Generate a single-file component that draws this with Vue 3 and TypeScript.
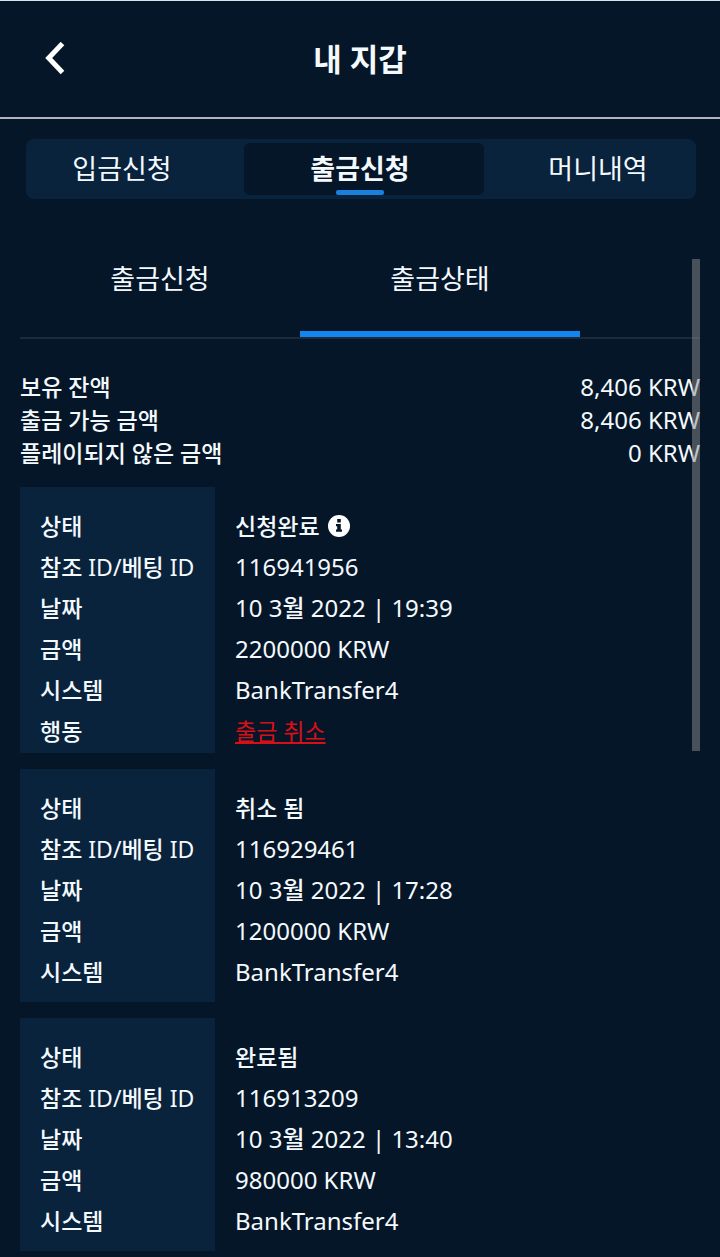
<script setup lang="ts">
import { ref } from 'vue'

interface Row {
  label: string
  value: string
  korean?: boolean
  info?: boolean
  action?: boolean
}

const sections = ['입금신청', '출금신청', '머니내역']
const activeSection = ref(1)

const subTabs = ['출금신청', '출금상태']
const activeSubTab = ref(1)

const balances = [
  { label: '보유 잔액', amount: '8,406 KRW' },
  { label: '출금 가능 금액', amount: '8,406 KRW' },
  { label: '플레이되지 않은 금액', amount: '0 KRW' },
]

const requests: Row[][] = [
  [
    { label: '상태', value: '신청완료', korean: true, info: true },
    { label: '참조 ID/베팅 ID', value: '116941956' },
    { label: '날짜', value: '10 3월 2022 | 19:39' },
    { label: '금액', value: '2200000 KRW' },
    { label: '시스템', value: 'BankTransfer4' },
    { label: '행동', value: '출금 취소', korean: true, action: true },
  ],
  [
    { label: '상태', value: '취소 됨', korean: true },
    { label: '참조 ID/베팅 ID', value: '116929461' },
    { label: '날짜', value: '10 3월 2022 | 17:28' },
    { label: '금액', value: '1200000 KRW' },
    { label: '시스템', value: 'BankTransfer4' },
  ],
  [
    { label: '상태', value: '완료됨', korean: true },
    { label: '참조 ID/베팅 ID', value: '116913209' },
    { label: '날짜', value: '10 3월 2022 | 13:40' },
    { label: '금액', value: '980000 KRW' },
    { label: '시스템', value: 'BankTransfer4' },
  ],
]

// Splits a text into runs so that Latin and Korean can carry different weights.
function runs(text: string) {
  return text
    .split(/([가-힣]+)/)
    .filter(Boolean)
    .map((part) => ({ part, hangul: /[가-힣]/.test(part) }))
}
</script>

<template>
  <div class="page" lang="ko">
    <header class="header">
      <button class="back" type="button" aria-label="뒤로">
        <svg width="20" height="34" viewBox="0 0 20 34" fill="none" stroke="#fff" stroke-width="5">
          <path d="M17.5 1.5 L3.7 16 L17.5 30.5" />
        </svg>
      </button>
      <h1 class="title">내 지갑</h1>
    </header>

    <nav class="sections">
      <button
        v-for="(name, i) in sections"
        :key="name"
        type="button"
        class="section"
        :class="{ active: i === activeSection }"
        @click="activeSection = i"
      >
        {{ name }}
      </button>
    </nav>

    <main class="panel">
      <div class="subtabs" role="tablist">
        <button
          v-for="(name, i) in subTabs"
          :key="name"
          type="button"
          role="tab"
          class="subtab"
          :class="{ active: i === activeSubTab }"
          :aria-selected="i === activeSubTab"
          @click="activeSubTab = i"
        >
          {{ name }}
        </button>
      </div>

      <dl class="balances">
        <div v-for="b in balances" :key="b.label" class="balance">
          <dt class="korean">{{ b.label }}</dt>
          <dd>{{ b.amount }}</dd>
        </div>
      </dl>

      <table v-for="(rows, n) in requests" :key="n" class="request">
        <tbody>
          <tr v-for="row in rows" :key="row.label" :class="{ 'action-row': row.action }">
            <th scope="row"><span v-for="(r, k) in runs(row.label)" :key="k" :class="{ hangul: r.hangul }">{{ r.part }}</span></th>
            <td :class="{ korean: row.korean }">
              <a v-if="row.action" class="cancel" href="#">{{ row.value }}</a>
              <div v-else class="value">
                <span><span v-for="(r, k) in runs(row.value)" :key="k" :class="{ hangul: r.hangul }">{{ r.part }}</span></span>
                <svg v-if="row.info" class="info" width="22" height="22" viewBox="0 0 22 22">
                  <circle cx="11" cy="11" r="11" fill="#fff" />
                  <path
                    d="M9.2 4h3.6v3.4H9.2z M8 9h4.8v5.6H14v2.2H8v-2.2h1.2v-3.4H8z"
                    fill="#051628"
                  />
                </svg>
              </div>
            </td>
          </tr>
        </tbody>
      </table>

      <div class="scrollbar" aria-hidden="true"></div>
    </main>
  </div>
</template>

<style>
body {
  margin: 0;
  background: #051628;
}
</style>

<style scoped>
.page {
  min-height: 100vh;
  box-sizing: border-box;
  border-top: 1px solid #d5e6ee;
  background: #051628;
  color: #f4f9fd;
  font-family: 'Noto Sans', 'Noto Sans CJK KR', sans-serif;
  font-size: 24px;
  overflow: hidden;
}

button {
  margin: 0;
  padding: 0;
  border: 0;
  background: none;
  color: inherit;
  font: inherit;
  cursor: pointer;
}

.header {
  display: grid;
  grid-template-columns: 110px 1fr 110px;
  align-items: center;
  height: 116px;
  border-bottom: 2px solid #b3b3c0;
}

.back {
  display: flex;
  justify-content: center;
  padding: 12px 0;
}

.title {
  margin: 0;
  font-size: 31px;
  font-weight: 700;
  line-height: 40px;
  text-align: center;
}

.sections {
  display: grid;
  grid-template-columns: 218px 240px 1fr;
  margin: 20px 24px 0 26px;
  padding: 4px 0;
  border-radius: 8px;
  background: #09233d;
}

.section {
  height: 52px;
  font-size: 27px;
  line-height: 52px;
}

.section:first-child {
  padding-right: 26px;
}

.section:last-child {
  padding-left: 16px;
}

.section.active {
  position: relative;
  padding-right: 8px;
  border-radius: 6px;
  background: #051628;
  font-weight: 700;
}

.section.active::after {
  content: '';
  position: absolute;
  bottom: 0;
  left: 92px;
  width: 48px;
  height: 5px;
  border-radius: 2px;
  background: #1b7fdc;
}

.panel {
  position: relative;
  margin: 60px 20px 0;
}

.subtabs {
  display: flex;
  border-bottom: 2px solid #1b2b3a;
}

.subtab {
  flex: 0 0 280px;
  padding-bottom: 32px;
  border-bottom: 6px solid transparent;
  font-size: 27px;
  line-height: 40px;
}

.subtab.active {
  border-color: #1485ee;
}

.balances {
  margin: 32px 0 17px;
}

.balance {
  display: flex;
  justify-content: space-between;
  align-items: flex-start;
  line-height: 33px;
}

.balance dd {
  margin: 0;
  line-height: 31px;
}

.korean {
  font-size: 23px;
}

dt.korean,
.hangul {
  font-weight: 500;
}

.request {
  width: 100%;
  margin-bottom: 16px;
  border-collapse: collapse;
  line-height: 40px;
}

.request th,
.request td {
  height: 41px;
  padding: 0 20px;
  vertical-align: baseline;
}

.request th {
  width: 155px;
  background: #09233d;
  font-size: 23px;
  font-weight: 400;
  text-align: left;
  white-space: nowrap;
}

.request tr:first-child > * {
  padding-top: 19px;
}

.request tr:last-child > * {
  padding-bottom: 9px;
}

.request tr.action-row:last-child > * {
  padding-bottom: 1px;
}

.value {
  display: flex;
  align-items: center;
  gap: 8px;
}

.cancel {
  color: #d90f17;
  text-decoration: underline;
}

.scrollbar {
  position: absolute;
  top: 0;
  right: 0;
  width: 8px;
  height: 492px;
  background: rgba(140, 140, 140, 0.5);
}
</style>
